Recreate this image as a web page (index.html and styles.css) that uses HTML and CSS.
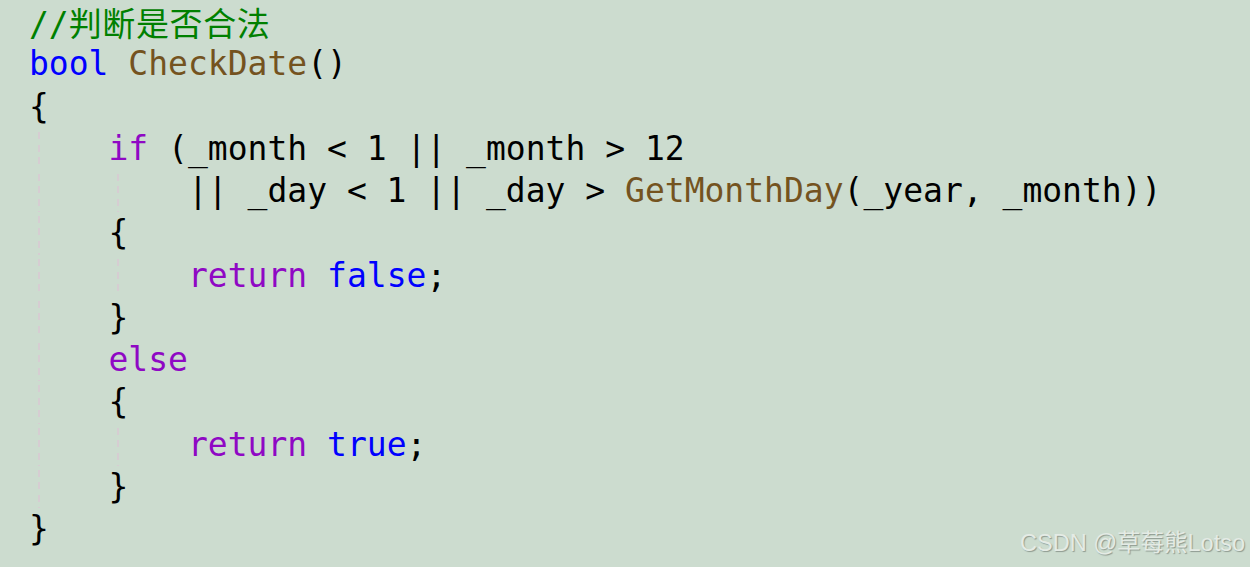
FILE: index.html
```html
<!DOCTYPE html>
<html lang="zh">
<head>
<meta charset="utf-8">
<title>CheckDate</title>
<link rel="stylesheet" href="styles.css">
</head>
<body>
<div class="editor">
  <div class="code">
    <div class="line"><span class="cm">//<span class="cjk">判断是否合法</span></span></div>
    <div class="line"><span class="kw">bool</span> <span class="fn">CheckDate</span>()</div>
    <div class="line">{</div>
    <div class="line"><span class="ind g"></span><span class="ctl">if</span> (_month &lt; 1 || _month &gt; 12</div>
    <div class="line"><span class="ind g"></span><span class="ind g"></span>|| _day &lt; 1 || _day &gt; <span class="fn">GetMonthDay</span>(_year, _month))</div>
    <div class="line"><span class="ind g"></span>{</div>
    <div class="line"><span class="ind g"></span><span class="ind g"></span><span class="ctl">return</span> <span class="kw">false</span>;</div>
    <div class="line"><span class="ind g"></span>}</div>
    <div class="line"><span class="ind g"></span><span class="ctl">else</span></div>
    <div class="line"><span class="ind g"></span>{</div>
    <div class="line"><span class="ind g"></span><span class="ind g"></span><span class="ctl">return</span> <span class="kw">true</span>;</div>
    <div class="line"><span class="ind g"></span>}</div>
    <div class="line">}</div>
  </div>
  <div class="watermark">CSDN @草莓熊Lotso</div>
</div>
</body>
</html>
```
FILE: styles.css
```css
html, body {
  margin: 0;
  padding: 0;
}
body {
  background: #ccdccf;
  width: 1250px;
  height: 567px;
  overflow: hidden;
}
.editor {
  position: relative;
  width: 1250px;
  height: 567px;
}
.code {
  padding: 1px 0 0 29px;
  font-family: "DejaVu Sans Mono", "Noto Sans CJK SC", monospace;
  font-size: 33px;
  color: #000000;
}
.line {
  height: 42.25px;
  line-height: 42.25px;
  white-space: pre;
}
.ind {
  display: inline-block;
  width: 4ch;
  height: 42.25px;
  vertical-align: top;
}
.g {
  background-image: repeating-linear-gradient(to bottom, rgba(0,0,0,0) 0px, rgba(0,0,0,0) 4px, #d6cdd2 4px, #d6cdd2 11px, rgba(0,0,0,0) 11px, rgba(0,0,0,0) 12.5px);
  background-size: 2px 100%;
  background-position: 9px 0;
  background-repeat: no-repeat;
}
.cm { color: #008000; }
.cjk {
  font-family: "Noto Sans CJK SC", sans-serif;
  font-size: 33px;
  letter-spacing: 0.6px;
}
.kw { color: #0000ff; }
.ctl { color: #8f08c4; }
.fn { color: #74531f; }
.watermark {
  position: absolute;
  right: 5px;
  top: 531px;
  font-family: "Liberation Sans", "Noto Sans CJK SC", sans-serif;
  font-size: 23.5px;
  line-height: 24px;
  color: #e4ebe5;
  text-shadow: 1px 1px 1px #8e9a90;
  white-space: nowrap;
}
```
